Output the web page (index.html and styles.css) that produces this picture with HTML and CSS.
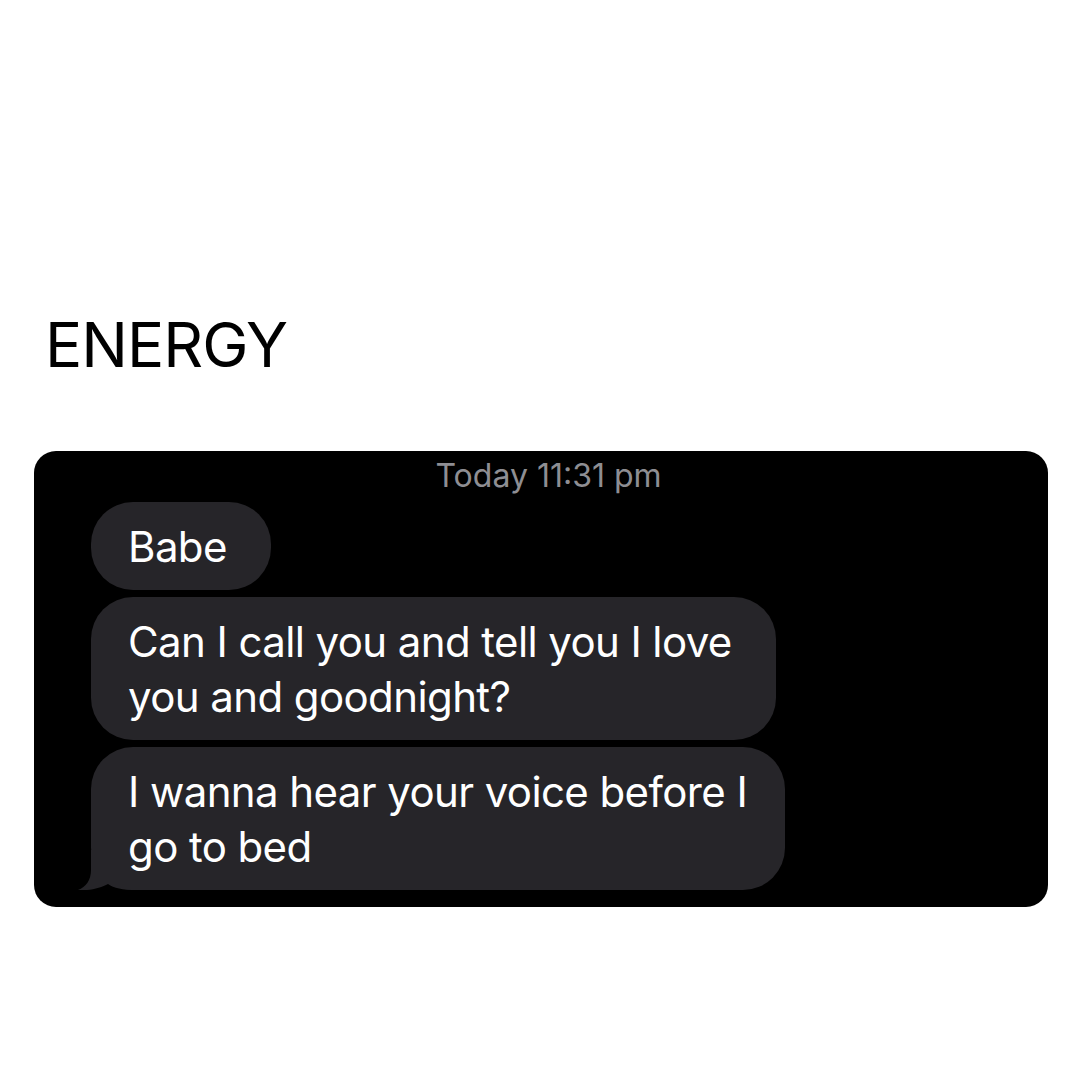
FILE: index.html
```html
<!DOCTYPE html>
<html>
<head>
<meta charset="utf-8">
<link rel="stylesheet" href="styles.css">
</head>
<body>
<div class="page">
  <h1 class="title">ENERGY</h1>
  <div class="panel">
    <div class="stamp">Today 11:31 pm</div>
    <div class="thread">
      <div class="bubble"><span class="text">Babe</span></div>
      <div class="bubble"><span class="text">Can I call you and tell you I love<br>you and goodnight?</span></div>
      <div class="bubble last">
        <svg class="tail" viewBox="0 0 60 40" width="60" height="40"><path d="M14 0 L14 20 C14 30 9 37 1 40 C12 41 24 38 31 34 C37 38 45 40 60 40 L60 0 Z" fill="#262529"/></svg>
        <span class="text">I wanna hear your voice before I<br>go to bed</span>
      </div>
    </div>
  </div>
</div>
</body>
</html>
```
FILE: styles.css
```css
html, body {
  margin: 0;
  padding: 0;
  background: #ffffff;
}
.page {
  width: 1080px;
  height: 1080px;
  padding-top: 314px;
  box-sizing: border-box;
}
.title {
  margin: 0 0 75px 45px;
  font-family: "Inter", "Roboto", sans-serif;
  font-weight: 400;
  font-size: 62px;
  line-height: 62px;
  color: #000;
  letter-spacing: -1px;
}
.panel {
  margin-left: 34px;
  width: 1014px;
  height: 456px;
  background: #000;
  border-radius: 22px;
  padding: 6px 0 0 0;
  box-sizing: border-box;
}
.stamp {
  text-align: center;
  font-family: "Inter", "Roboto", sans-serif;
  font-size: 32px;
  line-height: 38px;
  color: #8e8e93;
  letter-spacing: 0;
  padding-left: 15px;
}
.thread {
  display: flex;
  flex-direction: column;
  align-items: flex-start;
  gap: 7px;
  margin: 7px 0 0 57px;
}
.bubble {
  position: relative;
  background: #262529;
  color: #fff;
  font-family: "Inter", "Roboto", sans-serif;
  font-size: 42px;
  line-height: 55px;
  letter-spacing: -0.6px;
  padding: 16.5px 44px 16.5px 37px;
  border-radius: 42px;
}
.bubble.last {
  padding-right: 38px;
}
.text {
  position: relative;
}
.tail {
  position: absolute;
  left: -14px;
  bottom: 0;
}
```
